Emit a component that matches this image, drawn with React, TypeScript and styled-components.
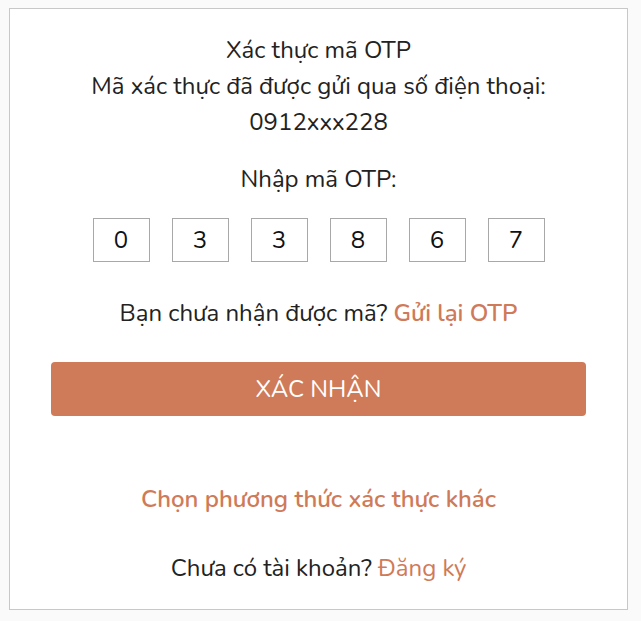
import styled, { createGlobalStyle } from "styled-components";

const GlobalStyle = createGlobalStyle`
    html, body {
        margin: 0;
        background: #fafafa;
    }
    body {
        padding: 8px 13px 11px 9px;
        font-family: "Nunito", "Open Sans", sans-serif;
        color: #222;
    }
`

const Card = styled.div`
    background: #fff;
    border: 1px solid #c8c8c8;
    height: 602px;
    box-sizing: border-box;
    padding: 23px 41px 0;
    display: flex;
    flex-direction: column;
    align-items: center;
    text-align: center;
`

const Line = styled.p`
    margin: 0;
    font-size: 24px;
    line-height: 36px;
`

const Label = styled(Line)`
    margin-top: 21px;
`

const OtpRow = styled.div`
    display: flex;
    gap: 22px;
    margin-top: 21px;
`

const OtpBox = styled.div`
    width: 57px;
    height: 44px;
    box-sizing: border-box;
    border: 1px solid #a8a8a8;
    display: flex;
    align-items: center;
    justify-content: center;
    font-size: 24px;
    color: #111;
`

const Resend = styled(Line)`
    margin-top: 33px;
`

const Accent = styled.span<{ $bold?: boolean }>`
    color: #cf7a58;
    font-weight: ${({ $bold }) => ($bold ? 600 : 400)};
    cursor: pointer;
`

const SubmitButton = styled.button`
    margin-top: 31px;
    width: 100%;
    height: 54px;
    border: none;
    border-radius: 4px;
    background: #cf7a58;
    color: #fff;
    font-family: inherit;
    font-size: 24px;
    cursor: pointer;
`

const OtherMethod = styled(Line)`
    margin-top: 65px;
`

const Footer = styled(Line)`
    margin-top: 33px;
`

const digits = ["0", "3", "3", "8", "6", "7"]

const App = () => {
    return (
        <>
            <GlobalStyle />
            <Card>
                <Line>Xác thực mã OTP</Line>
                <Line>Mã xác thực đã được gửi qua số điện thoại:</Line>
                <Line>0912xxx228</Line>
                <Label>Nhập mã OTP:</Label>
                <OtpRow>
                    {digits.map((d, i) => (
                        <OtpBox key={i}>{d}</OtpBox>
                    ))}
                </OtpRow>
                <Resend>
                    Bạn chưa nhận được mã? <Accent $bold>Gửi lại OTP</Accent>
                </Resend>
                <SubmitButton>XÁC NHẬN</SubmitButton>
                <OtherMethod>
                    <Accent $bold>Chọn phương thức xác thực khác</Accent>
                </OtherMethod>
                <Footer>
                    Chưa có tài khoản? <Accent>Đăng ký</Accent>
                </Footer>
            </Card>
        </>
    )
}

export default App;
